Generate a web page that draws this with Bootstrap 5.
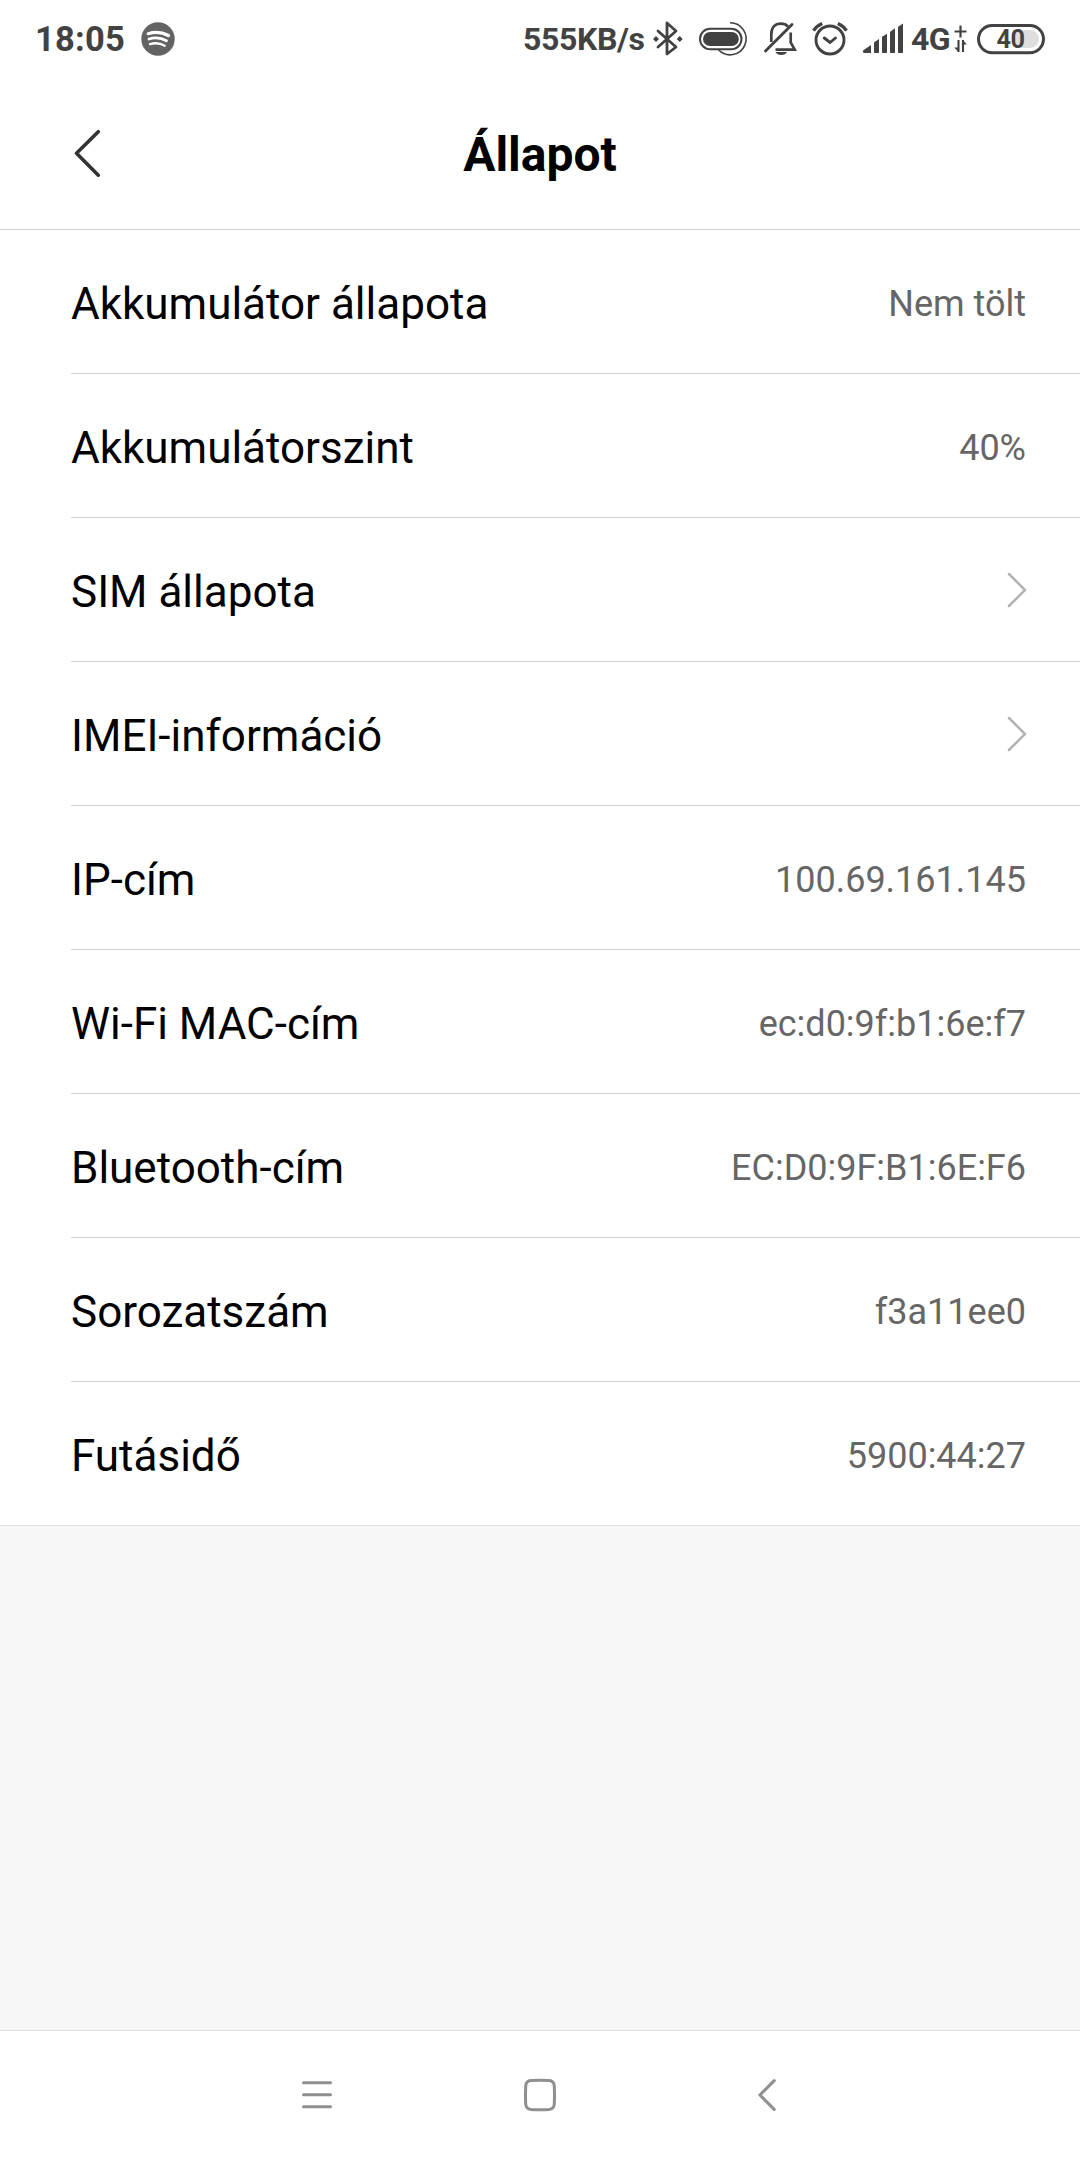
<!DOCTYPE html>
<html lang="hu">
<head>
<meta charset="utf-8">
<meta name="viewport" content="width=device-width, initial-scale=1">
<title>Állapot</title>
<link href="https://cdn.jsdelivr.net/npm/bootstrap@5.3.0/dist/css/bootstrap.min.css" rel="stylesheet">
<style>
  body { font-family: Roboto, sans-serif; background: #f7f7f7; color: #000; }
  svg { display: block; flex: none; overflow: visible; }
  .status-bar { height: 77px; padding: 0 35px 0 35px; color: #424242; font-weight: 700; line-height: 1; }
  .status-bar span { white-space: nowrap; flex: none; }
  .clock { font-size: 34.5px; width: 106px; letter-spacing: .2px; padding-top: 1px; }
  .net-speed { font-size: 32px; width: 129px; letter-spacing: -.35px; }
  .net-type { font-size: 32px; width: 44px; letter-spacing: -.5px; }
  .icon-pill { margin-left: 15px; }
  .icon-battery { margin-left: 9px; }
  .icon-muted { margin-left: 15px; }
  .icon-alarm { margin-left: 17px; }
  .title-bar { height: 153px; border-bottom: 1px solid #d4d4d4; padding: 0 74px; }
  .title-bar h1 { font-size: 48px; line-height: 1; font-weight: 700; margin: 4px 0 0; }
  .side-slot { width: 60px; padding-top: 2px; }
  .status-list { padding-left: 71px; border-bottom: 1px solid #e0e0e0; }
  .status-list .list-group-item { height: 144px; padding: 6px 54px 0 0; border-color: #d4d4d4; color: #000; }
  .status-list .list-group-item:last-child { height: 143px; }
  .item-name { font-size: 44px; line-height: 1.2; }
  .item-value { font-size: 36px; line-height: 1.2; color: #666; }
  .item-arrow { margin-bottom: 6px; }
  .nav-keys { height: 130px; border-top: 1px solid #e0e0e0; padding: 0 0 2px 302px; }
  .key-home { margin-left: 192px; }
  .key-back { margin-left: 202px; }
</style>
</head>
<body>
<div class="d-flex flex-column vh-100">
  <header class="bg-white">
    <div class="status-bar d-flex align-items-center">
      <span class="clock">18:05</span>
      <svg width="34" height="34" viewBox="0 0 34 34"><circle cx="17" cy="17" r="16.7" fill="#636363"/><g fill="none" stroke="#fff" stroke-linecap="round"><path d="M7.2 11.7Q17.5 8.3 27.5 13.5" stroke-width="3.2"/><path d="M8 17Q17.3 14.2 25.5 18.8" stroke-width="2.7"/><path d="M9 22.1Q16.8 19.8 23.7 23.7" stroke-width="2.3"/></g></svg>
      <span class="net-speed ms-auto">555KB/s</span>
      <svg width="32" height="36" viewBox="652 20 32 36"><path d="M658 30L676 46L667 53V22L676 30L658 46" fill="none" stroke="#424242" stroke-width="2.8" stroke-linejoin="round" stroke-linecap="round"/><g fill="#424242"><path d="M656 35l3 3-3 3-3-3zM679.7 35l3 3-3 3-3-3z"/></g></svg>
      <svg class="icon-pill" width="50" height="36" viewBox="699 20 50 36"><g fill="none" stroke="#424242"><path d="M730 21.8A16 16 0 1 1 718.5 48.8" stroke-width="1.6"/><rect x="700" y="27.8" width="41.5" height="20.4" rx="10.2" fill="#fff" stroke-width="2"/></g><rect x="703" y="31" width="35.8" height="14" rx="7" fill="#424242"/></svg>
      <svg class="icon-muted" width="32" height="36" viewBox="764 20 32 36"><g fill="none" stroke="#424242" stroke-width="2.7"><path d="M771.3 41V33.5C771.3 26.5 775 22.7 781 22.7C784 22.7 786.5 24 788 25.6M790.7 31.5V41.5L794.7 48.7H775.5"/><path d="M765.5 50L792 23.5" stroke-linecap="round" stroke-width="2.9"/></g><path d="M775.5 51H787Q785.5 54 781.2 54Q777 54 775.5 51Z" fill="#424242"/></svg>
      <svg class="icon-alarm" width="34" height="36" viewBox="813 20 34 36"><g fill="none" stroke="#424242" stroke-width="2.9"><circle cx="830" cy="39" r="14"/><path d="M824.3 37L830 41.5L835.5 37" stroke-linecap="round"/><path d="M813.5 29.7Q816.5 25 822.2 22.5M837.8 22.5Q843.5 25 846.5 29.7" stroke-width="3.3"/></g></svg>
      <svg class="ms-3" width="40" height="36" viewBox="863 20 40 36"><path fill="#424242" d="M863 49.5L871 44V52H864.5Q863 52 863 50.5ZM874 42Q874 41.5 874.5 41L879 38V52H875Q874 52 874 51ZM882 36.5Q882 36 882.5 35.5L887 32.7V52H883Q882 52 882 51ZM890 31.5Q890 31 890.5 30.5L895 27.3V52H891Q890 52 890 51ZM898 26.5Q898 26 898.5 25.5L903 22.5V52H899Q898 52 898 51Z"/></svg>
      <span class="net-type ms-2">4G</span>
      <svg width="13" height="36" viewBox="955 20 13 36"><path d="M960.5 24.5V36.5M954.5 30.5H966.5" stroke="#424242" stroke-width="2.2"/><path d="M958.5 39V51M963 39V51" fill="none" stroke="#424242" stroke-width="2.1"/><path d="M954.2 46.5H958.5V51ZM966.8 43.5H963V39Z" fill="#424242"/></svg>
      <svg class="icon-battery" width="68" height="36" viewBox="977 20 68 36"><rect x="978.5" y="24.5" width="65" height="27.2" rx="13.6" fill="#fff" stroke="#424242" stroke-width="3"/><path d="M1016 29H1030A9 9 0 0 1 1030 47H1016Z" fill="#dedede"/><text x="1010.4" y="47.2" text-anchor="middle" font-size="25.3" letter-spacing="-.7" fill="#424242">40</text></svg>
    </div>
    <div class="title-bar d-flex align-items-center justify-content-between">
      <div class="side-slot"><svg width="28" height="48" viewBox="74 130 28 48"><path d="M98.3 131.7L76.5 153.3L98.3 175.2" fill="none" stroke="#333" stroke-width="3.6" stroke-linecap="round" stroke-linejoin="round"/></svg></div>
      <h1>Állapot</h1>
      <div class="side-slot"></div>
    </div>
  </header>
  <main class="flex-grow-1">
    <div class="status-list bg-white">
      <ul class="list-group list-group-flush">
        <li class="list-group-item d-flex align-items-center justify-content-between"><span class="item-name">Akkumulátor állapota</span><span class="item-value">Nem tölt</span></li>
        <li class="list-group-item d-flex align-items-center justify-content-between"><span class="item-name">Akkumulátorszint</span><span class="item-value">40%</span></li>
        <li class="list-group-item d-flex align-items-center justify-content-between"><span class="item-name">SIM állapota</span><svg class="item-arrow" width="18" height="34" viewBox="0 0 18 34"><path d="M1 1L17 17L1 33" fill="none" stroke="#b3b3b3" stroke-width="2.5" stroke-linecap="round"/></svg></li>
        <li class="list-group-item d-flex align-items-center justify-content-between"><span class="item-name">IMEI-információ</span><svg class="item-arrow" width="18" height="34" viewBox="0 0 18 34"><path d="M1 1L17 17L1 33" fill="none" stroke="#b3b3b3" stroke-width="2.5" stroke-linecap="round"/></svg></li>
        <li class="list-group-item d-flex align-items-center justify-content-between"><span class="item-name">IP-cím</span><span class="item-value">100.69.161.145</span></li>
        <li class="list-group-item d-flex align-items-center justify-content-between"><span class="item-name">Wi-Fi MAC-cím</span><span class="item-value">ec:d0:9f:b1:6e:f7</span></li>
        <li class="list-group-item d-flex align-items-center justify-content-between"><span class="item-name">Bluetooth-cím</span><span class="item-value">EC:D0:9F:B1:6E:F6</span></li>
        <li class="list-group-item d-flex align-items-center justify-content-between"><span class="item-name">Sorozatszám</span><span class="item-value">f3a11ee0</span></li>
        <li class="list-group-item d-flex align-items-center justify-content-between"><span class="item-name">Futásidő</span><span class="item-value">5900:44:27</span></li>
      </ul>
    </div>
  </main>
  <nav class="nav-keys bg-white d-flex align-items-center">
    <svg width="30" height="32" viewBox="302 2079 30 32"><path d="M303.5 2082.7H330.5M303.5 2094.7H330.5M303.5 2106.7H330.5" stroke="#8f8f8f" stroke-width="3" stroke-linecap="round"/></svg>
    <svg class="key-home" width="32" height="32" viewBox="0 0 32 32"><path d="M7 1.6Q16 1.1 25 1.6Q30 2 30.3 7Q30.8 16 30.3 25Q30 30 25 30.4Q16 30.9 7 30.4Q2 30 1.7 25Q1.2 16 1.7 7Q2 2 7 1.6Z" fill="none" stroke="#8f8f8f" stroke-width="3"/></svg>
    <svg class="key-back" width="18" height="32" viewBox="758 2079 18 32"><path d="M774.2 2080.7L759.9 2095L774.2 2109.3" fill="none" stroke="#8f8f8f" stroke-width="3.1" stroke-linecap="round" stroke-linejoin="round"/></svg>
  </nav>
</div>
<script src="https://cdn.jsdelivr.net/npm/bootstrap@5.3.0/dist/js/bootstrap.bundle.min.js"></script>
</body>
</html>
